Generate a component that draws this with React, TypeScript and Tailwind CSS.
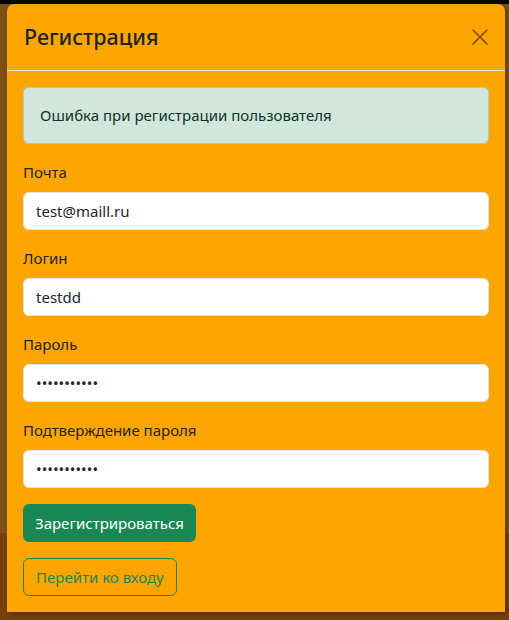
import { useState } from 'react';

const fields = [
  { label: 'Почта', type: 'text', value: 'test@maill.ru' },
  { label: 'Логин', type: 'text', value: 'testdd' },
  { label: 'Пароль', type: 'password', value: 'qwertyuiopa' },
  { label: 'Подтверждение пароля', type: 'password', value: 'qwertyuiopa' },
];

function CloseIcon() {
  return (
    <svg width="16" height="16" viewBox="0 0 16 16" fill="none" stroke="currentColor" strokeWidth="1.6" strokeLinecap="round">
      <path d="M1 1l14 14M15 1L1 15" />
    </svg>
  );
}

export default function App() {
  const [values, setValues] = useState(fields.map((f) => f.value));

  return (
    <div
      className="h-[620px] w-[509px] overflow-hidden pt-[4px] pl-[7px] bg-[linear-gradient(to_bottom,#050505_0,#050505_4px,#7c5014_4px,#7c5014_533px,#773f09_533px)] font-['Noto_Sans',sans-serif] text-[#212529]"
    >
      <div className="w-[498px] rounded-t-[7px] bg-[#ffa500] shadow-[2px_2px_4px_rgba(0,0,0,0.25)]">
        {/* Header */}
        <div className="flex h-[67px] items-center justify-between border-b border-[#dee2e6] pl-[17px] pr-[17px]">
          <h5 className="text-[21.5px] font-medium leading-none text-[#212529]">Регистрация</h5>
          <button className="text-[#7a5010]">
            <CloseIcon />
          </button>
        </div>

        {/* Body */}
        <div className="px-[16px] pt-[16px] pb-[16px] text-[15px]">
          <div className="mb-[16px] flex h-[57px] items-center rounded-[6px] border border-[#a3cfbb] bg-[#d1e7dd] px-[16px] text-[#0a3622]">
            Ошибка при регистрации пользователя
          </div>

          {fields.map((f, i) => (
            <div key={f.label} className="mb-[16px]">
              <label className="mb-[8px] block leading-[24px]">{f.label}</label>
              <input
                type={f.type}
                value={values[i]}
                onChange={(e) => {
                  const next = [...values];
                  next[i] = e.target.value;
                  setValues(next);
                }}
                className="block h-[38px] w-full rounded-[6px] border border-[#dee2e6] bg-white px-[12px] text-[15px] text-[#212529] outline-none"
              />
            </div>
          ))}

          <button className="block h-[38px] rounded-[6px] bg-[#198754] px-[12px] text-white">
            Зарегистрироваться
          </button>
          <button className="mt-[16px] block h-[38px] rounded-[6px] border border-[#198754] px-[12px] text-[#198754]">
            Перейти ко входу
          </button>
        </div>
      </div>
    </div>
  );
}
